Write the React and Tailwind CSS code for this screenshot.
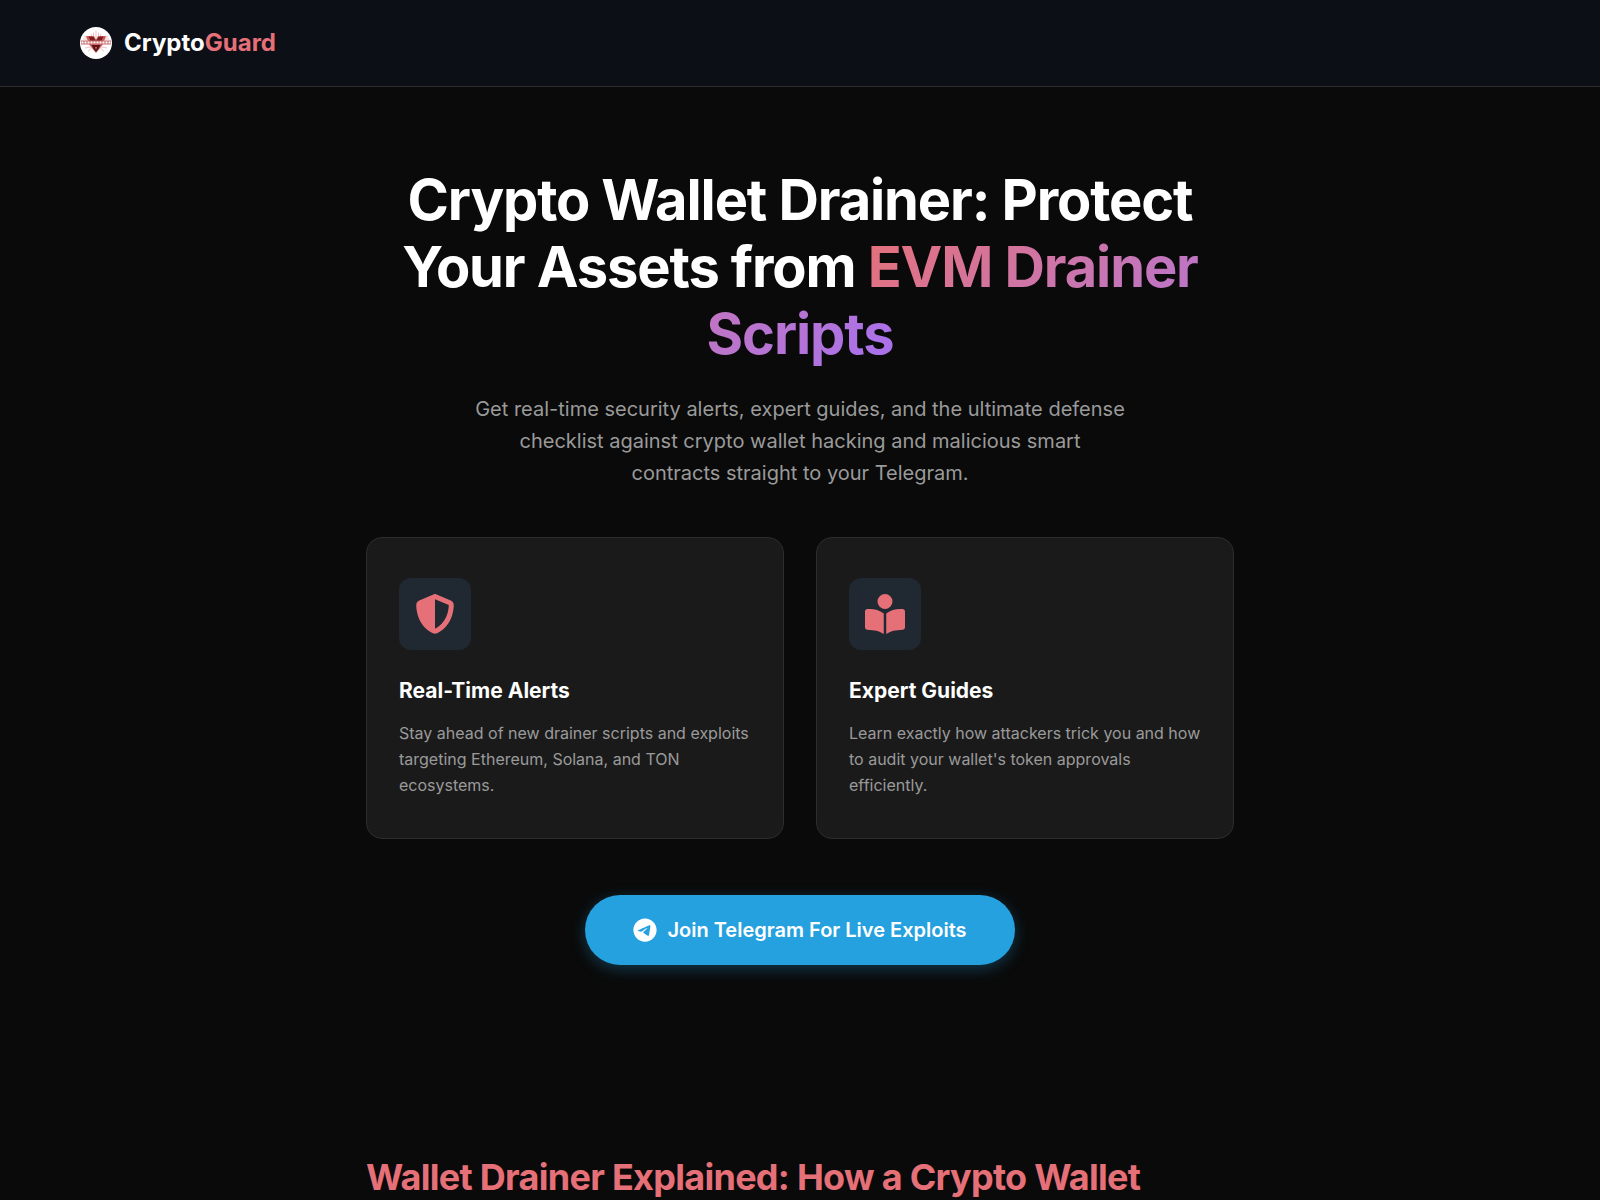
import { FaShieldHalved, FaBookOpenReader, FaTelegram } from "react-icons/fa6";

const features = [
  {
    icon: FaShieldHalved,
    title: "Real-Time Alerts",
    text: "Stay ahead of new drainer scripts and exploits targeting Ethereum, Solana, and TON ecosystems.",
  },
  {
    icon: FaBookOpenReader,
    title: "Expert Guides",
    text: "Learn exactly how attackers trick you and how to audit your wallet's token approvals efficiently.",
  },
];

function Logo() {
  return (
    <svg viewBox="0 0 32 32" className="size-8 shrink-0" aria-hidden="true">
      <circle cx="16" cy="16" r="16" fill="#fff" />
      <g stroke="#efb4b4" strokeWidth="0.8" fill="none">
        <path d="M16 4v7M13.500 5.500v4M18.500 5.500v4M11 7l1 3M21 7l-1 3M4 9l4 3M28 9l-4 3M5 21l6-1M27 21l-6-1M8 24l4-3M24 24l-4-3M3 12h5M29 12h-5" />
      </g>
      <path d="M6 9h8l2 3.500L18 9h8L22.500 18 16 26 9.500 18z" fill="#cf5c5c" />
      <path d="M8.500 9.500l5 .5 2.500 4 2.500-4 5-.5-2.500 5h-10z" fill="#7a2022" />
      <path d="M11.500 18h9l-2 4-2.500 3-2.500-3z" fill="#5a1518" />
      <path d="M14.500 19.500l1.500 1 1.500-1-1.500 3z" fill="#d8696a" />
      <path d="M1 15.500h30" stroke="#c96a6c" strokeWidth="4" />
      <path d="M1.500 15.500h29" stroke="#fff" strokeWidth="2" strokeDasharray="2 1" />
    </svg>
  );
}

export default function App() {
  return (
    <div className="h-screen overflow-hidden bg-[#0a0a0a] font-['Inter',sans-serif] text-white">
      <header className="border-b border-[#2d2d2d] bg-[#0c0f16] px-[5%] py-6">
        <a href="#" className="inline-flex items-center gap-3 align-top text-2xl leading-[38px] font-bold">
          <Logo />
          <span>
            Crypto<span className="text-[#e57078]">Guard</span>
          </span>
        </a>
      </header>

      <main className="mx-auto max-w-[900px] px-4">
        <section className="flex flex-col items-center pt-20 pb-20 text-center">
          <h1 className="text-[56px] leading-[1.2] font-bold tracking-[-0.02em]">
            Crypto Wallet Drainer: Protect Your Assets from{" "}
            <span className="bg-linear-135 from-[#e57078] to-[#a770ef] bg-clip-text text-transparent">
              EVM Drainer Scripts
            </span>
          </h1>
          <p className="mt-6 max-w-[650px] text-xl leading-8 text-[#9a9a9a]">
            Get real-time security alerts, expert guides, and the ultimate defense checklist against crypto wallet
            hacking and malicious smart contracts straight to your Telegram.
          </p>

          <div className="mt-12 grid w-full gap-8 text-left md:grid-cols-2">
            {features.map(({ icon: Icon, title, text }) => (
              <article key={title} className="rounded-2xl border border-[#2d2d2d] bg-[#1a1a1a] px-8 py-10">
                <div className="flex size-18 items-center justify-center rounded-xl bg-[#202831]">
                  <Icon className="size-10 text-[#e57078]" aria-hidden="true" />
                </div>
                <h3 className="mt-6 text-[21px] leading-[34px] font-bold">{title}</h3>
                <p className="mt-3 text-base leading-[26px] text-[#9a9a9a]">{text}</p>
              </article>
            ))}
          </div>

          <a
            href="#"
            className="mt-14 inline-flex items-center gap-2.5 rounded-full bg-[#26a1e0] px-12 py-[19px] text-xl leading-8 font-semibold shadow-[0_4px_15px_rgba(38,161,224,0.3)]"
          >
            <FaTelegram className="size-6" aria-hidden="true" />
            Join Telegram For Live Exploits
          </a>
        </section>

        <section className="pt-[103px]">
          <h2 className="text-4xl leading-[58px] font-bold tracking-[-0.02em] text-[#e57078]">
            Wallet Drainer Explained: How a Crypto Wallet Drainer Works
          </h2>
        </section>
      </main>
    </div>
  );
}
